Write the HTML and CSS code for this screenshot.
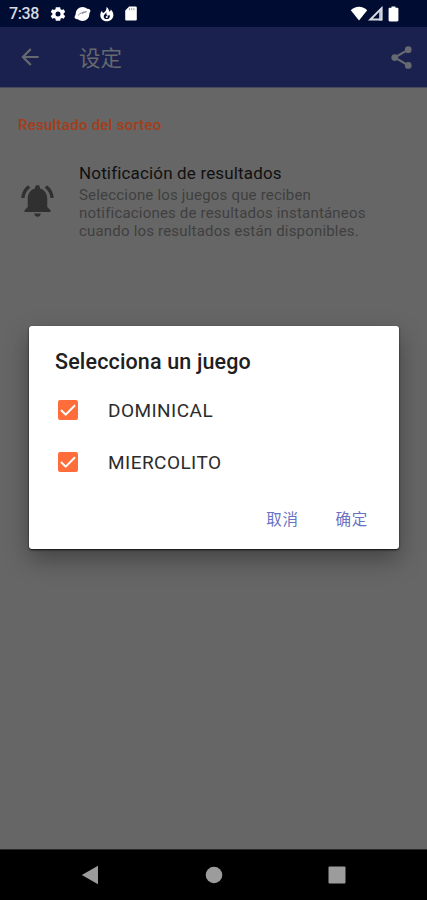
FILE: index.html
```html
<!DOCTYPE html>
<html lang="es">
<head>
    <meta charset="UTF-8">
    <meta name="viewport" content="width=device-width, initial-scale=1.0">
    <title>设定</title>
    <link rel="stylesheet" href="styles.css">
</head>
<body>
    <div class="statusbar">
        <span class="time">7:38</span>
        <svg class="gear" width="16" height="16" viewBox="1.500 1.500 21 21"><path d="M19.400 13a7.500 7.500 0 0 0 0-2l2.100-1.600-2-3.500-2.500 1a7.500 7.500 0 0 0-1.700-1L14.900 3H9.100l-.400 2.900a7.500 7.500 0 0 0-1.700 1l-2.500-1-2 3.500L4.600 11a7.500 7.500 0 0 0 0 2l-2.100 1.600 2 3.500 2.500-1c.500.400 1.100.700 1.700 1l.400 2.900h5.800l.400-2.900c.600-.300 1.200-.600 1.700-1l2.500 1 2-3.500zM12 15.300a3.300 3.300 0 1 1 0-6.600 3.300 3.300 0 0 1 0 6.600z"/></svg>
        <svg class="planet" width="17" height="16" viewBox="0 0 17 16">
            <circle cx="8.500" cy="8" r="6.900"/>
            <ellipse cx="8.500" cy="8" rx="8.700" ry="3.900" transform="rotate(-28 8.500 8)"/>
            <path class="line" d="M4 9.500c2-2.400 5.500-4 8.500-3.700-2 .3-3.200 1.200-4.500 2"/>
        </svg>
        <svg class="flame" width="14" height="16" viewBox="0 0 14 16">
            <path d="M6.500 1c2.200 1.300 2.100 3.100 3.100 4.700.8-.4 1.200-1.400 1.100-2.400 1.800 1.800 2.700 3.900 2.700 5.600 0 3.600-2.900 6.300-6.700 6.300S.3 12.500.3 9.200c0-1.900.6-3.400 1.700-4.500.1 1.300.6 2.100 1.500 2.300C5.400 5.600 6.900 3.600 6.500 1z"/>
            <path class="hole" d="M6.500 6.200c-1 1.400-2.800 2.300-2.800 4.200 0 1.500 1.300 2.700 3 2.700s3.100-1.100 3.100-2.700c0-.6-.2-1.200-.5-1.600-.4.600-.9.900-1.500.9-1.300 0-1.600-1.700-1.300-3.500z"/>
            <circle cx="6.800" cy="11" r="1.100"/>
        </svg>
        <svg class="sdcard" width="12" height="15" viewBox="0 0 12 15">
            <path d="M4.200.5h6.300c.8 0 1.300.5 1.300 1.300v11.400c0 .8-.5 1.300-1.300 1.300h-9c-.8 0-1.300-.5-1.300-1.300V4.500z"/>
            <path class="line" d="M4.500 2.200v2M6.700 2.200v2M8.900 2.200v2"/>
        </svg>
        <svg class="wifi" width="18" height="15" viewBox="0 0 18 15"><path d="M9 14.500.8 4.200C3 2 5.800.8 9 .8s6 1.200 8.200 3.400z"/></svg>
        <svg class="signal" width="15" height="15" viewBox="0 0 15 15">
            <path class="dim" d="M11 4 14.300.8v13.700H11z"/>
            <path class="edge" d="M2.400 13.500 13.500 2.400v11.100z"/>
        </svg>
        <svg class="battery" width="11" height="16" viewBox="0 0 11 16"><path d="M3.500.5h4v1.300h1.700c.7 0 1.200.5 1.200 1.200v11.200c0 .7-.5 1.200-1.200 1.200H1.800c-.7 0-1.200-.5-1.200-1.200V3c0-.7.500-1.200 1.200-1.200h1.700z"/></svg>
    </div>

    <div class="appbar">
        <svg class="back" width="26" height="26" viewBox="0 0 24 24"><path d="M20 11H7.830l5.590-5.590L12 4l-8 8 8 8 1.410-1.410L7.830 13H20z"/></svg>
        <h1>设定</h1>
        <svg class="share" width="27" height="27" viewBox="0 0 24 24">
            <path d="M18 5 6 12l12 7"/>
            <circle cx="18" cy="5" r="3"/>
            <circle cx="6" cy="12" r="3"/>
            <circle cx="18" cy="19" r="3"/>
        </svg>
    </div>

    <div class="content">
        <h2>Resultado del sorteo</h2>
        <div class="preference">
            <svg class="bell" width="39" height="39" viewBox="0 0 24 24"><path d="M7.580 4.080 6.150 2.650C3.750 4.480 2.170 7.300 2.030 10.500h2c.15-2.650 1.510-4.970 3.550-6.420zm12.390 6.420h2c-.15-3.200-1.730-6.020-4.120-7.850l-1.420 1.430c2.020 1.450 3.390 3.770 3.540 6.420zM18 11c0-3.070-1.640-5.640-4.500-6.320V4c0-.83-.67-1.500-1.500-1.500s-1.500.67-1.500 1.500v.68C7.630 5.360 6 7.920 6 11v5l-2 2v1h16v-1l-2-2v-5zm-6 11c.14 0 .27-.01.4-.04.65-.14 1.180-.58 1.440-1.180.1-.24.15-.5.15-.78h-4c.01 1.100.9 2 2.010 2z"/></svg>
            <div class="text">
                <h3>Notificación de resultados</h3>
                <p>Seleccione los juegos que reciben<br>notificaciones de resultados instantáneos<br>cuando los resultados están disponibles.</p>
            </div>
        </div>
    </div>

    <div class="dialog">
        <h2>Selecciona un juego</h2>
        <div class="option">
            <svg width="20" height="20" viewBox="0 0 20 20"><rect width="20" height="20" rx="2"/><path d="m3 10 4.700 4.700L17 5.300"/></svg>
            <span>DOMINICAL</span>
        </div>
        <div class="option">
            <svg width="20" height="20" viewBox="0 0 20 20"><rect width="20" height="20" rx="2"/><path d="m3 10 4.700 4.700L17 5.300"/></svg>
            <span>MIERCOLITO</span>
        </div>
        <div class="buttons">
            <span>取消</span>
            <span>确定</span>
        </div>
    </div>

    <div class="navbar">
        <svg width="18" height="20" viewBox="0 0 18 20"><path d="M.8 10 17 .8v18.400z"/></svg>
        <svg width="18" height="18" viewBox="0 0 18 18"><circle cx="9" cy="9" r="8.300"/></svg>
        <svg width="18" height="18" viewBox="0 0 18 18"><rect x=".5" y=".5" width="17" height="17" rx="1"/></svg>
    </div>
</body>
</html>
```
FILE: styles.css
```css
*{
    margin: 0;
    padding: 0;
    box-sizing: border-box;
}
body{
    display: flex;
    flex-direction: column;
    position: relative;
    height: 900px;
    overflow: hidden;
    background-color: #666666;
    font-family: Roboto, "Noto Sans CJK SC", sans-serif;
}
svg{
    display: block;
    flex-shrink: 0;
}
.statusbar{
    display: flex;
    align-items: center;
    height: 27px;
    padding: 0 28px 0 9px;
    background-color: #000c31;
}
.statusbar svg{
    fill: #fff;
}
.statusbar .hole{
    fill: #000c31;
}
.statusbar .line{
    fill: none;
    stroke: #8b90a0;
}
.time{
    width: 41px;
    font-size: 16px;
    font-weight: 500;
    letter-spacing: -0.4px;
    color: #d8dae2;
}
.planet{
    margin-left: 8px;
}
.flame{
    margin-left: 9px;
}
.sdcard{
    margin-left: 11px;
}
.wifi{
    margin-left: auto;
}
.signal .dim{
    fill: #aab0bd;
}
.statusbar .edge{
    fill: none;
    stroke: #d7dae1;
    stroke-width: 2;
}
.battery{
    margin-left: 5px;
}
.appbar{
    display: flex;
    align-items: center;
    height: 61px;
    padding: 0 12px 0 17px;
    background-color: #1b214e;
    border-bottom: 1px solid #494b59;
}
.back{
    fill: #66696f;
}
.appbar h1{
    margin: 0 0 2px 36px;
    font-size: 21.5px;
    font-weight: 400;
    color: #66696f;
}
.share{
    margin-left: auto;
    fill: #66696f;
}
.share path{
    fill: none;
    stroke: #66696f;
    stroke-width: 2;
}
.content{
    flex: 1;
    padding: 27px 18px 0;
}
.content h2{
    font-size: 15px;
    line-height: 20px;
    font-weight: 500;
    letter-spacing: 0.25px;
    color: #a33d1a;
}
.preference{
    display: flex;
    align-items: center;
    margin-top: 27px;
}
.bell{
    margin: 0 22px 2px 0;
    fill: #303030;
}
.preference h3{
    font-size: 17px;
    line-height: 22px;
    font-weight: 400;
    letter-spacing: 0.16px;
    color: #101010;
}
.preference p{
    margin-top: 2px;
    font-size: 15px;
    line-height: 18px;
    letter-spacing: 0.19px;
    white-space: nowrap;
    color: #3f3f3f;
}
.dialog{
    position: absolute;
    top: 326px;
    left: 29px;
    width: 370px;
    height: 223px;
    padding: 22px 27px 0 26px;
    border-radius: 3px;
    background-color: #fff;
    box-shadow: 0 1px 2px #111, 0 10px 24px rgba(0, 0, 0, 0.35);
}
.dialog h2{
    font-size: 21.5px;
    line-height: 28px;
    font-weight: 500;
    letter-spacing: 0.15px;
    color: #202020;
}
.option{
    display: flex;
    align-items: center;
    height: 52px;
    padding-left: 3px;
    font-size: 19px;
    letter-spacing: 0.45px;
    color: #2c2c2c;
}
.dialog h2 + .option{
    margin-top: 8px;
}
.option svg{
    margin-right: 30px;
}
.option rect{
    fill: #ff6e3a;
}
.option path{
    fill: none;
    stroke: #fff;
    stroke-width: 2;
}
.buttons{
    display: flex;
    justify-content: flex-end;
    gap: 37px;
    margin-top: 20px;
    padding-right: 4px;
    font-size: 15.5px;
    line-height: 24px;
    letter-spacing: 0.7px;
    color: #6a72c4;
}
.navbar{
    display: flex;
    align-items: center;
    justify-content: space-between;
    height: 51px;
    padding: 0 81px 1px;
    background-color: #000;
    border-top: 1px solid #2a2a2a;
}
.navbar svg{
    fill: #9c9c9c;
}
```
